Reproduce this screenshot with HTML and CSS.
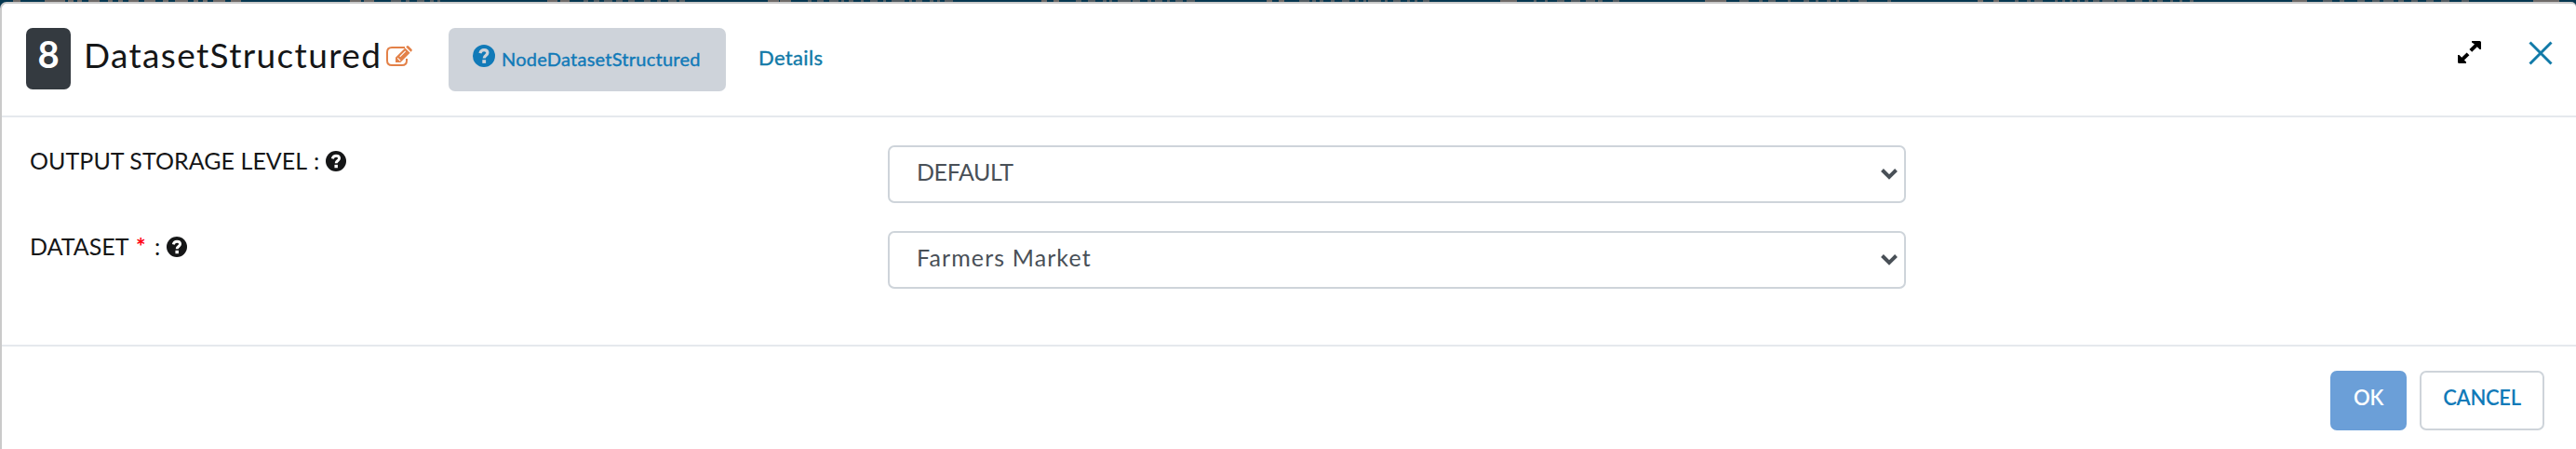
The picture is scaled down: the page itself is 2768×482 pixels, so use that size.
FILE: index.html
```html
<!DOCTYPE html>
<html lang="en">
<head>
<meta charset="utf-8">
<title>DatasetStructured</title>
<link rel="stylesheet" href="styles.css">
</head>
<body>
<svg width="0" height="0" class="defs" aria-hidden="true">
  <symbol id="help" viewBox="0 0 24 24">
    <circle cx="12" cy="12" r="12" fill="currentColor"/>
    <path d="M7.9 9.1C8.6 6.8 10 5.7 12.1 5.7c2.3 0 3.8 1.2 3.8 3.1 0 2.6-3.7 2.7-3.7 5.6" fill="none" stroke="var(--mark)" stroke-width="3.2"/>
    <path d="M10.3 16.2h3.8v3.7h-3.8z" fill="var(--mark)"/>
  </symbol>
</svg>
<svg class="nav-edge" viewBox="0 0 2768 2" preserveAspectRatio="none" aria-hidden="true">
  <path d="M14 1h8M48 1h22M73 1h6M83 1h5M95 1h12M116 1h5M127 1h5M138 1h11M155 1h12M175 1h6M188 1h14M208 1h5M218 1h5M229 1h13M248 1h11M376 1h12M391 1h11M588 1h11M602 1h10M825 1h12M838 1h12M1119 1h6M1132 1h6M1361 1h6M1374 1h6M1612 1h18M1832 1h23M2125 1h6M2142 1h6M2463 1h16M2722 1h28" stroke-width="2"/>
  <path d="M420 1h11M436 1h4M448 1h8M462 1h4M470 1h3M627 1h5M638 1h6M649 1h9M662 1h7M675 1h7M692 1h7M706 1h4M718 1h9M730 1h6M868 1h4M878 1h7M891 1h10M904 1h3M912 1h5M925 1h3M935 1h8M949 1h3M958 1h14M977 1h3M984 1h7M999 1h4M1007 1h3M1015 1h9M1156 1h6M1169 1h8M1185 1h4M1192 1h3M1201 1h14M1217 1h8M1233 1h4M1241 1h8M1254 1h3M1263 1h8M1275 1h9M1396 1h11M1410 1h4M1418 1h4M1430 1h4M1442 1h8M1456 1h4M1465 1h3M1470 1h14M1488 1h3M1497 1h8M1512 1h3M1520 1h3M1529 1h7M1648 1h3M1660 1h3M1673 1h8M1688 1h10M1704 1h10M1717 1h5M1733 1h7M1869 1h10M1890 1h4M1900 1h8M1921 1h3M1938 1h6M1951 1h3M1963 1h4M1973 1h3M1985 1h3M1997 1h9M2028 1h4M2165 1h4M2178 1h4M2186 1h9M2208 1h3M2216 1h3M2224 1h3M2232 1h3M2240 1h4M2249 1h7M2259 1h13M2275 1h10M2294 1h8M2309 1h4M2318 1h6M2332 1h3M2342 1h3M2353 1h4M2496 1h10M2514 1h5M2533 1h8M2549 1h8M2561 1h11M2577 1h6M2591 1h7M2607 1h8M2623 1h9M2645 1h8" stroke-width="1.6"/>
</svg>
<main class="modal">
  <header class="head">
    <span class="badge">8</span>
    <h1 class="title">DatasetStructured</h1>
    <svg class="edit" viewBox="0 0 28 23" role="img" aria-label="Edit">
      <path d="M20 2H6Q1 2 1 7v9q0 5 5 5h11q5 0 5-5v-2" fill="none" stroke="currentColor" stroke-width="2"/>
      <path d="M10 18v-5.3L20.3 2.4l5.3 5.3L15.300 18z" fill="currentColor"/>
      <path d="M21.300 1.400 22 .6q1-1 2.100 0l3.200 3.200q1 1 0 2.100l-.8.8z" fill="currentColor"/>
      <path d="m12.200 13.300 3 3M14.700 11.900l6-6" stroke="#fff" stroke-width="1.100"/>
    </svg>
    <a class="pill"><svg class="q-big"><use href="#help"/></svg><span class="node">NodeDatasetStructured</span></a>
    <a class="details">Details</a>
    <div class="tools">
      <svg class="expand" viewBox="0 0 25 24" role="img" aria-label="Expand">
        <path d="M15 0h8.500Q25 0 25 1.500V9h-1.500l-2.700-2.700-5.600 5.500-2.800-2.800 5.600-5.500L15 1.500zM0 15h1.500l2.700 2.700 5.400-5.200 2.800 2.800-5.500 5.200 2.100 2V24H1.500Q0 24 0 22.500z"/>
      </svg>
      <svg class="close" viewBox="0 0 26 26" role="img" aria-label="Close"><path d="m1.500 1.500 23 23m0-23-23 23"/></svg>
    </div>
  </header>
  <section class="form">
    <label class="label"><span class="l-storage">OUTPUT STORAGE LEVEL</span><span class="colon">:</span><svg class="q"><use href="#help"/></svg></label>
    <div class="select"><span class="v-default">DEFAULT</span><svg class="chev" viewBox="0 0 18 12"><path d="m1.500 1.500 7.500 7.500 7.500-7.500"/></svg></div>
    <label class="label"><span class="l-dataset">DATASET</span><span class="star">*</span><span class="colon">:</span><svg class="q"><use href="#help"/></svg></label>
    <div class="select"><span class="v-market">Farmers Market</span><svg class="chev" viewBox="0 0 18 12"><path d="m1.500 1.500 7.500 7.500 7.500-7.500"/></svg></div>
  </section>
  <footer class="foot">
    <button class="btn ok">OK</button>
    <button class="btn cancel">CANCEL</button>
  </footer>
</main>
</body>
</html>
```
FILE: styles.css
```css
* { box-sizing: border-box; }
body {
  margin: 0;
  height: 482px;
  overflow: hidden;
  display: flex;
  flex-direction: column;
  background: #063750;
  color: #151617;
  font-family: Lato, "Liberation Sans", sans-serif;
  white-space: nowrap;
}
svg { display: block; flex: none; }
.defs { display: none; }
.nav-edge { width: 2768px; height: 2px; stroke: #6f6b69; }
.modal {
  flex: 1;
  background: #fff;
  border: 2px solid #cacaca;
  border-right: 0;
  border-bottom: 0;
  border-radius: 7px 5px 0 0;
}
.head {
  height: 122px;
  padding: 26px 25px 0 26px;
  border-bottom: 2px solid #e5e9ed;
  display: flex;
  align-items: flex-start;
}
.badge {
  width: 48px;
  height: 66px;
  border-radius: 7px;
  background: #343a40;
  color: #fff;
  font-size: 40px;
  font-weight: 700;
  line-height: 56px;
  text-align: center;
}
.title {
  width: 325px;
  margin: 0 0 0 14px;
  font-size: 37px;
  font-weight: 400;
  line-height: 58px;
  letter-spacing: 1.35px;
}
.edit { width: 28px; height: 23px; margin-top: 19px; color: #e38148; }
.pill {
  width: 298px;
  height: 68px;
  margin-left: 39px;
  padding-left: 26px;
  border-radius: 7px;
  background: #ced3da;
  color: #117ab8;
  display: flex;
  gap: 7px;
}
.q-big { width: 24px; height: 24px; margin-top: 18px; --mark: #ced3da; }
.node { font-size: 20px; line-height: 66px; letter-spacing: .25px; -webkit-text-stroke: .4px; }
.details { margin-left: 35px; font-size: 22px; line-height: 64px; letter-spacing: .35px; color: #117aa8; -webkit-text-stroke: .4px; }
.tools { margin-left: auto; display: flex; gap: 51px; padding-top: 14px; }
.expand { width: 25px; height: 24px; }
.close { width: 26px; height: 26px; fill: none; stroke: #117aa8; stroke-width: 3; }
.form {
  height: 244px;
  padding: 30px 0 0 30px;
  display: grid;
  grid-template-columns: 922px 1094px;
  grid-auto-rows: 62px;
  row-gap: 30px;
}
.label { display: flex; font-size: 25px; line-height: 33px; }
.l-storage { width: 305px; letter-spacing: .05px; }
.l-dataset { width: 114px; }
.star { width: 20px; color: #f01; font-weight: 700; }
.colon { width: 13px; }
.q { width: 22px; height: 22px; margin-top: 6px; --mark: #fff; }
.select {
  padding: 0 7px 0 29px;
  border: 2px solid #ced4da;
  border-radius: 7px;
  color: #495057;
  font-size: 25px;
  line-height: 53px;
  display: flex;
  justify-content: space-between;
}
.v-default { letter-spacing: -.4px; }
.v-market { letter-spacing: 1.1px; }
.chev { width: 18px; height: 12px; margin-top: 23px; fill: none; stroke: #495057; stroke-width: 4; }
.foot {
  padding: 26px 34px 0;
  border-top: 2px solid #e5e9ed;
  display: flex;
  justify-content: flex-end;
  gap: 14px;
}
.btn {
  height: 64px;
  padding: 0 0 8px;
  border: 2px solid #ced4da;
  border-radius: 7px;
  background: #fff;
  font: 600 22px Lato, "Liberation Sans", sans-serif;
  letter-spacing: -.3px;
  color: #117ab8;
}
.ok { width: 82px; background: #6b9fd8; border-color: #6b9fd8; color: #fff; }
.cancel { width: 134px; }
```
